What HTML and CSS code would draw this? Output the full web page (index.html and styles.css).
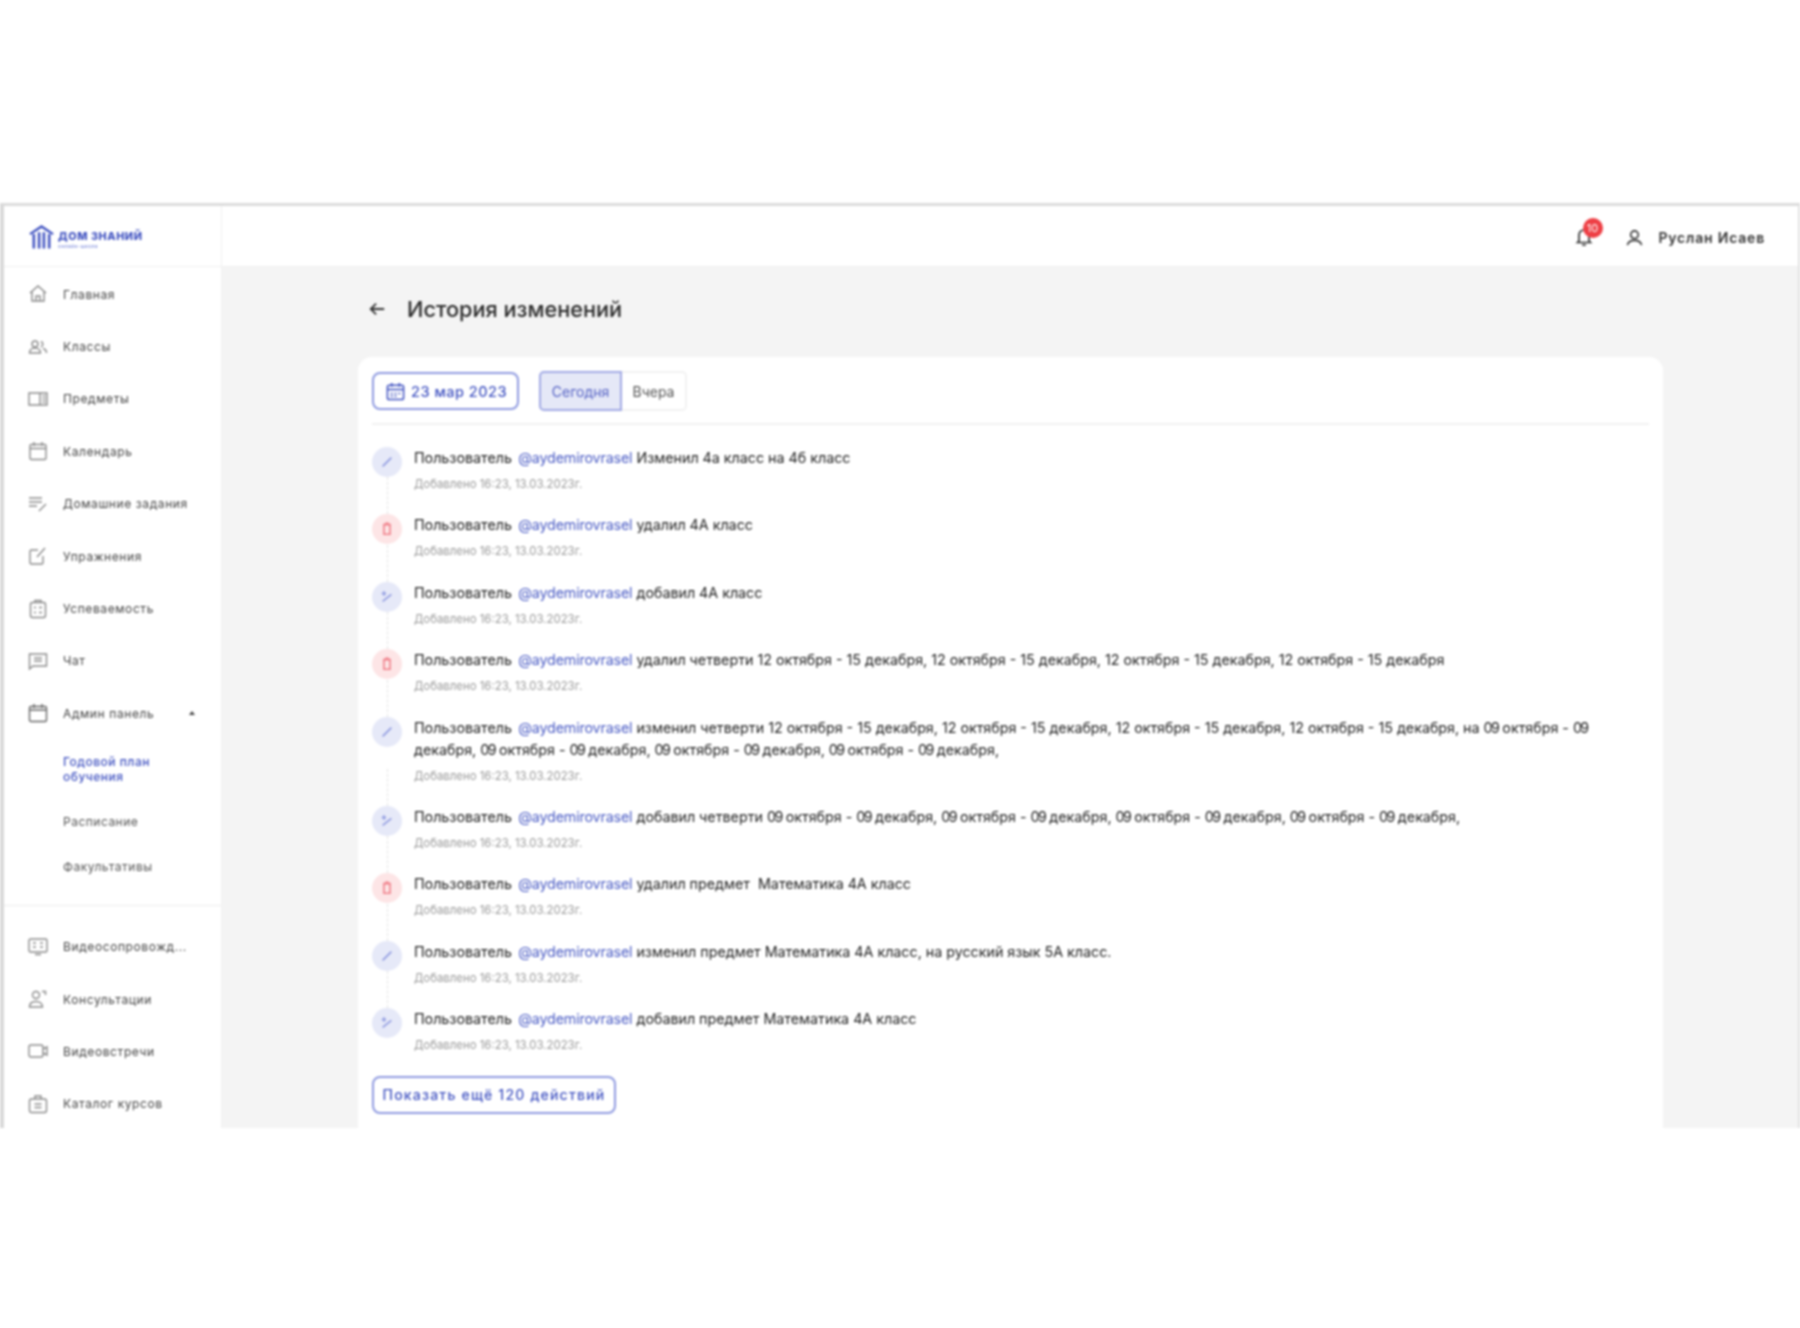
FILE: index.html
```html
<!DOCTYPE html>
<html lang="ru">
<head>
<meta charset="utf-8">
<title>История изменений</title>
<link rel="stylesheet" href="styles.css">
</head>
<body>
<div class="frame">
  <aside class="sidebar">
    <div class="logo">
      <svg class="logo-mark" viewBox="0 0 26 26" fill="none" stroke="#3f51c0"><path d="M1 10 13 2l12 8" stroke-width="2.4"/><path d="M5 10v15M10.500 8v17M15.500 8v17M21 10v15" stroke-width="2.6"/></svg>
      <div class="logo-text"><div class="logo-name">ДОМ ЗНАНИЙ</div><div class="logo-sub">онлайн-школа</div></div>
    </div>
    <nav class="nav">
      <a class="nav-item"><svg class="ico" viewBox="0 0 20 20"><path d="M2 9 10 2l8 7M4 8v9h12V8M8 17v-5h4v5"/></svg><span>Главная</span></a>
      <a class="nav-item"><svg class="ico" viewBox="0 0 20 20"><circle cx="7" cy="7" r="3"/><path d="M1.500 16c0-3 2.500-5 5.500-5s5.500 2 5.500 5zM13 4.500a3 3 0 0 1 0 5.500M15 11.500c2 .5 3.500 2 3.500 4.500"/></svg><span>Классы</span></a>
      <a class="nav-item"><svg class="ico wide" viewBox="0 0 20 16"><path d="M1 2h18v12H1zM12 2v12M14.500 5h3M14.500 8h3M14.500 11h3"/></svg><span>Предметы</span></a>
      <a class="nav-item"><svg class="ico" viewBox="0 0 20 20"><rect x="2" y="3.500" width="16" height="15" rx="1.500"/><path d="M2 7.500h16M6 1v4M14 1v4"/></svg><span>Календарь</span></a>
      <a class="nav-item"><svg class="ico" viewBox="0 0 20 20"><path d="M1 4h13M1 8h13M1 12h8M11 17l7-7"/></svg><span>Домашние задания</span></a>
      <a class="nav-item"><svg class="ico" viewBox="0 0 20 20"><path d="M15 10v6.500a1.500 1.500 0 0 1-1.500 1.500h-10A1.500 1.500 0 0 1 2 16.500v-11A1.500 1.500 0 0 1 3.500 4H10M9 11l8-9"/></svg><span>Упражнения</span></a>
      <a class="nav-item"><svg class="ico" viewBox="0 0 20 20"><rect x="2.500" y="3.500" width="15" height="15" rx="2"/><path d="M7 3.500V1.500h6v2M6 8.500h2M11 8.500h3M6 13.500h2M11 13.500h3"/></svg><span>Успеваемость</span></a>
      <a class="nav-item"><svg class="ico" viewBox="0 0 20 20"><path d="M1.500 3h17v12H5l-3.500 3zM6 7h8M6 10h8"/></svg><span>Чат</span></a>
      <a class="nav-item admin"><svg class="ico" viewBox="0 0 20 20"><rect x="1.500" y="3.500" width="17" height="15" rx="1.500"/><path d="M1.500 7h17M6 1v4M14 1v4"/></svg><span>Админ панель</span><i class="caret"></i></a>
      <a class="sub-item active">Годовой план обучения</a>
      <a class="sub-item">Расписание</a>
      <a class="sub-item">Факультативы</a>
    </nav>
    <nav class="nav nav-bottom">
      <a class="nav-item"><svg class="ico wide" viewBox="0 0 20 18"><rect x="1" y="1" width="18" height="13" rx="1.500"/><path d="M5 5h3M12 5h3M5 9h3M12 9h3M7 16.500h6"/></svg><span>Видеосопровожд...</span></a>
      <a class="nav-item"><svg class="ico" viewBox="0 0 20 20"><circle cx="8" cy="6" r="3.500"/><path d="M1.500 18c0-3.500 2.500-5.500 6.500-5.500s6.500 2 6.500 5.500zM14 2.500h3.500V6"/></svg><span>Консультации</span></a>
      <a class="nav-item"><svg class="ico wide" viewBox="0 0 20 16"><rect x="1" y="2" width="14" height="12" rx="2"/><path d="M15 6l4-2v8l-4-2"/></svg><span>Видеовстречи</span></a>
      <a class="nav-item"><svg class="ico" viewBox="0 0 20 20"><rect x="1.500" y="5" width="17" height="13.500" rx="2"/><path d="M7 5V2h6v3M6.500 10h7M6.500 13.500h7"/></svg><span>Каталог курсов</span></a>
    </nav>
  </aside>
  <div class="main">
    <header class="topbar">
      <div class="bell"><svg viewBox="0 0 20 20" fill="none" stroke="#333" stroke-width="1.700"><path d="M5 14V8a5 5 0 0 1 10 0v6l1.500 1.500h-13zM8 18h4"/></svg><b class="badge">10</b></div>
      <svg class="user-ico" viewBox="0 0 20 20" fill="none" stroke="#333" stroke-width="1.700"><circle cx="10" cy="7" r="4"/><path d="M2.500 18c1-3.500 3.500-5 7.500-5s6.500 1.500 7.500 5"/></svg>
      <span class="user-name">Руслан Исаев</span>
    </header>
    <main class="content">
      <div class="page-head">
        <svg class="back" viewBox="0 0 20 20" fill="none" stroke="#333" stroke-width="2"><path d="M18 10H3M9 4l-6 6 6 6"/></svg>
        <h1>История изменений</h1>
      </div>
      <section class="card">
        <div class="filters">
          <button class="btn date"><svg viewBox="0 0 20 20" fill="none" stroke="#3f51c0" stroke-width="1.600"><rect x="1.500" y="3.500" width="17" height="15" rx="2"/><path d="M1.500 8h17M6 1v4M14 1v4M5 12h2M9 12h2M13 12h2M5 15h2M9 15h2"/></svg>23 мар 2023</button>
          <div class="seg"><span class="seg-on">Сегодня</span><span class="seg-off">Вчера</span></div>
        </div>
        <ul class="log">
          <li class="row"><i class="dot blue"><svg viewBox="0 0 16 16"><path d="M3 13 13 3"/></svg></i><div><p>Пользователь <a>@aydemirovrasel</a> Изменил 4а класс на 4б класс</p><small>Добавлено 16:23, 13.03.2023г.</small></div></li>
          <li class="row"><i class="dot red"><svg viewBox="0 0 16 16"><path d="M3.500 3h9M4.500 3v11h7V3M6 1.500h4"/></svg></i><div><p>Пользователь <a>@aydemirovrasel</a> удалил 4А класс</p><small>Добавлено 16:23, 13.03.2023г.</small></div></li>
          <li class="row"><i class="dot blue"><svg viewBox="0 0 16 16"><path d="M3 13 13 5M2 4h5M4.500 1.500v5"/></svg></i><div><p>Пользователь <a>@aydemirovrasel</a> добавил 4А класс</p><small>Добавлено 16:23, 13.03.2023г.</small></div></li>
          <li class="row"><i class="dot red"><svg viewBox="0 0 16 16"><path d="M3.500 3h9M4.500 3v11h7V3M6 1.500h4"/></svg></i><div><p>Пользователь <a>@aydemirovrasel</a> удалил четверти 12 октября - 15 декабря, 12 октября - 15 декабря, 12 октября - 15 декабря, 12 октября - 15 декабря</p><small>Добавлено 16:23, 13.03.2023г.</small></div></li>
          <li class="row"><i class="dot blue"><svg viewBox="0 0 16 16"><path d="M3 13 13 3"/></svg></i><div><p>Пользователь <a>@aydemirovrasel</a> изменил четверти 12 октября - 15 декабря, 12 октября - 15 декабря, 12 октября - 15 декабря, 12 октября - 15 декабря, на <span class="nn">09</span> октября - <span class="nn">09</span> декабря, <span class="nn">09</span> октября - <span class="nn">09</span> декабря, <span class="nn">09</span> октября - <span class="nn">09</span> декабря, <span class="nn">09</span> октября - <span class="nn">09</span> декабря,</p><small>Добавлено 16:23, 13.03.2023г.</small></div></li>
          <li class="row"><i class="dot blue"><svg viewBox="0 0 16 16"><path d="M3 13 13 5M2 4h5M4.500 1.500v5"/></svg></i><div><p>Пользователь <a>@aydemirovrasel</a> добавил четверти <span class="nn">09</span> октября - <span class="nn">09</span> декабря, <span class="nn">09</span> октября - <span class="nn">09</span> декабря, <span class="nn">09</span> октября - <span class="nn">09</span> декабря, <span class="nn">09</span> октября - <span class="nn">09</span> декабря,</p><small>Добавлено 16:23, 13.03.2023г.</small></div></li>
          <li class="row"><i class="dot red"><svg viewBox="0 0 16 16"><path d="M3.500 3h9M4.500 3v11h7V3M6 1.500h4"/></svg></i><div><p>Пользователь <a>@aydemirovrasel</a> удалил предмет&nbsp; Математика 4А класс</p><small>Добавлено 16:23, 13.03.2023г.</small></div></li>
          <li class="row"><i class="dot blue"><svg viewBox="0 0 16 16"><path d="M3 13 13 3"/></svg></i><div><p>Пользователь <a>@aydemirovrasel</a> изменил предмет Математика 4А класс, на русский язык 5А класс.</p><small>Добавлено 16:23, 13.03.2023г.</small></div></li>
          <li class="row"><i class="dot blue"><svg viewBox="0 0 16 16"><path d="M3 13 13 5M2 4h5M4.500 1.500v5"/></svg></i><div><p>Пользователь <a>@aydemirovrasel</a> добавил предмет Математика 4А класс</p><small>Добавлено 16:23, 13.03.2023г.</small></div></li>
        </ul>
        <button class="btn more">Показать ещё 120 действий</button>
      </section>
    </main>
  </div>
</div>
</body>
</html>
```
FILE: styles.css
```css
* { box-sizing: border-box; }
html, body { margin: 0; height: 100%; background: #fff; }
body { padding-top: 203px; font-family: Inter, "Liberation Sans", sans-serif; color: #333; }
p, h1, ul { margin: 0; padding: 0; }
a { color: inherit; text-decoration: none; }

.frame {
  display: flex;
  height: 925px;
  border-top: 3px solid #dcdcdc;
  border-left: 4px solid #d9d9d9;
  border-right: 2px solid #e2e2e2;
  overflow: hidden;
  filter: blur(1px);
}

.sidebar { flex: 0 0 218px; background: #fff; border-right: 1px solid #f1f1f1; }
.logo { display: flex; align-items: center; gap: 4px; height: 61px; padding: 2px 0 0 25px; border-bottom: 1px solid #f0f0f0; }
.logo-mark { width: 25px; height: 26px; }
.logo-name { font-size: 10.800px; font-weight: 800; color: #3f51c0; letter-spacing: .6px; line-height: 12px; margin-top: 6px; }
.logo-sub { font-size: 5px; color: #6b7bd6; line-height: 6px; letter-spacing: .4px; }

.nav { padding: 1px 0 0; }
.nav-item { display: flex; align-items: center; height: 52.4px; padding-left: 24px; font-size: 12px; color: #444; letter-spacing: .6px; }
.nav-item span { white-space: nowrap; }
.ico { width: 20px; height: 20px; flex: none; margin-right: 15px; fill: none; stroke: #8a8a8a; stroke-width: 1.400; }
.admin { color: #444; position: relative; }
.admin .ico { stroke: #666; }
.caret { margin-left: auto; margin-right: 26px; width: 0; height: 0; border: 3.500px solid transparent; border-top: 0; border-bottom: 4px solid #444; }
.sub-item { display: block; width: 105px; margin-left: 59px; padding: 15px 0; font-size: 12px; line-height: 15px; color: #555; letter-spacing: .5px; }
.sub-item.active { color: #3f51c0; font-weight: 500; padding: 14.500px 0; }
.nav-bottom { margin-top: 16px; padding-top: 15px; border-top: 1px solid #ececec; }

.main { flex: 1; min-width: 0; display: flex; flex-direction: column; background: #f4f4f4; }
.topbar { flex: 0 0 61px; display: flex; align-items: center; justify-content: flex-end; padding: 2px 33px 0 0; background: #fff; border-bottom: 1px solid #f0f0f0; }
.bell { position: relative; width: 20px; height: 20px; margin-right: 31px; }
.bell svg { display: block; width: 20px; height: 20px; }
.badge { position: absolute; top: -9px; left: 9px; width: 20px; height: 20px; border-radius: 50%; background: #ee3f45; color: #fff; font-size: 11px; font-weight: 400; line-height: 20px; text-align: center; }
.user-ico { width: 19px; height: 19px; margin-right: 15px; }
.user-name { font-size: 14px; font-weight: 600; letter-spacing: .8px; color: #333; }

.content { flex: 1; padding: 0 135px 0 136px; min-height: 0; }
.page-head { display: flex; align-items: center; height: 90px; padding: 0 0 6px 10px; }
.back { width: 18px; height: 18px; margin-right: 21px; }
h1 { font-size: 21.700px; font-weight: 500; color: #2b2b2b; }

.card { background: #fff; border-radius: 14px 14px 0 0; padding: 14px 14px 0; height: 100%; }
.filters { display: flex; align-items: center; gap: 20px; height: 40px; padding-bottom: 12px; border-bottom: 2px solid #f1f1f1; box-sizing: content-box; }
.btn { font-family: inherit; background: #fff; border: 2px solid #8f9ae0; border-radius: 8px; color: #3f51c0; }
.date { display: flex; align-items: center; height: 38px; width: 147px; padding: 0 0 0 12px; font-size: 14.500px; font-weight: 500; letter-spacing: .5px; }
.date svg { width: 19px; height: 19px; margin-right: 6px; }
.seg { display: flex; height: 40px; font-size: 14px; }
.seg-on { display: flex; align-items: center; padding: 0 10px; background: #e5e8f7; border: 2px solid #a2aae4; border-radius: 5px 0 0 5px; color: #5562c4; width: 83px; justify-content: center; }
.seg-off { display: flex; align-items: center; justify-content: center; width: 65px; border: 2px solid #f2f2f2; border-left: 0; border-radius: 0 5px 5px 0; color: #555; }

.log { list-style: none; padding-top: 22px; }
.row { position: relative; display: flex; gap: 12px; padding-bottom: 23.400px; }
.row + .row::before { content: ""; position: absolute; left: 15px; top: -37px; height: 37px; border-left: 1px dashed #e4e4e4; }
.dot { flex: none; display: flex; align-items: center; justify-content: center; width: 30px; height: 30px; border-radius: 50%; }
.dot svg { width: 14px; height: 14px; fill: none; stroke-width: 1.800; }
.blue { background: #e6e9f8; }
.blue svg { stroke: #8f9ae0; }
.red { background: #fde5e6; }
.red svg { stroke: #f0808a; }
.row p { font-size: 14.280px; line-height: 22px; color: #222; }
.row a { color: #4a5bc4; margin-left: 2.300px; letter-spacing: -.15px; }
.nn { letter-spacing: -1.550px; }
.row small { display: block; margin-top: 9px; font-size: 11.400px; line-height: 13px; color: #9a9a9a; }

.more { display: block; height: 38px; width: 244px; font-size: 14px; font-weight: 500; letter-spacing: 1.200px; }
```
